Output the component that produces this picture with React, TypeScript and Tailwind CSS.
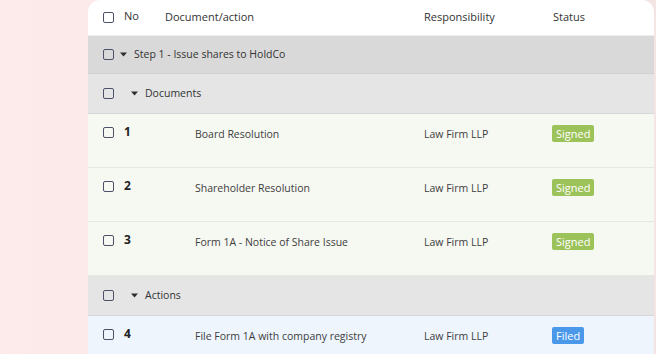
import React from "react";

type Row =
  | { kind: "step"; label: string }
  | { kind: "group"; label: string }
  | {
      kind: "item";
      no: number;
      title: string;
      owner: string;
      status: "Signed" | "Filed";
      tint: "green" | "blue";
    };

const rows: Row[] = [
  { kind: "step", label: "Step 1 - Issue shares to HoldCo" },
  { kind: "group", label: "Documents" },
  { kind: "item", no: 1, title: "Board Resolution", owner: "Law Firm LLP", status: "Signed", tint: "green" },
  { kind: "item", no: 2, title: "Shareholder Resolution", owner: "Law Firm LLP", status: "Signed", tint: "green" },
  { kind: "item", no: 3, title: "Form 1A - Notice of Share Issue", owner: "Law Firm LLP", status: "Signed", tint: "green" },
  { kind: "group", label: "Actions" },
  { kind: "item", no: 4, title: "File Form 1A with company registry", owner: "Law Firm LLP", status: "Filed", tint: "blue" },
];

function Box() {
  return <div className="h-[11px] w-[11px] shrink-0 rounded-[2px] border border-[#4d5168] bg-transparent" />;
}

function Caret() {
  return (
    <svg width="7" height="5" viewBox="0 0 7 5" className="shrink-0">
      <path d="M0 0.5 H7 L3.5 4.5 Z" fill="#2e2e2e" />
    </svg>
  );
}

export default function App() {
  return (
    <div
      className="h-[354px] w-[656px] overflow-hidden bg-gradient-to-r from-[#fdeaea] to-[#f4e4e4] pl-[88px]"
      style={{ fontFamily: '"Open Sans", "Noto Sans", sans-serif' }}
    >
      <div className="h-full w-[566px] overflow-hidden rounded-t-[12px] bg-white text-[10.5px] text-[#3d3d3d]">
        {/* header */}
        <div className="flex h-[36px] items-center border-b border-[#ececec] pl-[15px] text-[11px] text-[#333]">
          <div className="w-[21px]">
            <Box />
          </div>
          <div className="w-[41px] -mt-[3px]">No</div>
          <div className="w-[259px]">Document/action</div>
          <div className="w-[129px]">Responsibility</div>
          <div>Status</div>
        </div>

        {rows.map((r, i) => {
          if (r.kind === "step") {
            return (
              <div key={i} className="flex h-[38px] items-center border-b border-[#cfcfcf] bg-[#d9d9d9] pl-[15px]">
                <Box />
                <div className="ml-[6px]">
                  <Caret />
                </div>
                <span className="ml-[7px] text-[#333]">{r.label}</span>
              </div>
            );
          }
          if (r.kind === "group") {
            return (
              <div key={i} className="flex h-[40px] items-center border-b border-[#d6d6d6] bg-[#e5e5e5] pl-[15px]">
                <Box />
                <div className="ml-[17px]">
                  <Caret />
                </div>
                <span className="ml-[7px] text-[#333]">{r.label}</span>
              </div>
            );
          }
          return (
            <div
              key={i}
              className={
                "flex h-[54px] items-start border-b border-[#e6e8e2] pl-[15px] pt-[12px] " +
                (r.tint === "green" ? "bg-[#f6f8f2]" : "bg-[#eef5fd]")
              }
            >
              <div className="w-[21px] pt-[1px]">
                <Box />
              </div>
              <div className="w-[41px] -mt-[3px] text-[12px] font-bold text-[#222]">{r.no}</div>
              <div className="w-[259px] pl-[30px] pt-[1px]">{r.title}</div>
              <div className="w-[129px] pt-[1px]">{r.owner}</div>
              <div>
                <span
                  className={
                    "-ml-[1px] inline-block -mt-[1px] rounded-[2px] px-[4px] py-[1px] text-[11px] leading-[15px] text-white " +
                    (r.status === "Signed" ? "bg-[#9cc25a]" : "bg-[#4a98ea]")
                  }
                >
                  {r.status}
                </span>
              </div>
            </div>
          );
        })}
      </div>
    </div>
  );
}
